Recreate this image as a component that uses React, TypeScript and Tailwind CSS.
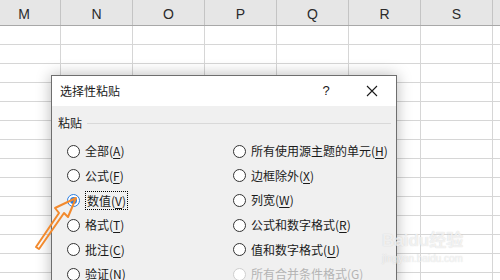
import React from "react";

const cols = ["M", "N", "O", "P", "Q", "R", "S"];
const rows = Array.from({ length: 14 });

function Label({ text, acc, disabled }: { text: string; acc: string; disabled?: boolean }) {
  return (
    <span className={disabled ? "text-[#b4b4b4]" : "text-[#1a1a1a]"}>
      {text}(<span className="underline underline-offset-2">{acc}</span>)
    </span>
  );
}

function Radio({ checked, disabled }: { checked?: boolean; disabled?: boolean }) {
  return (
    <span
      className={
        "flex h-[13px] w-[13px] shrink-0 items-center justify-center rounded-full border bg-white " +
        (checked ? "border-[#2a7de1]" : disabled ? "border-[#cfcfcf]" : "border-[#333333]")
      }
    >
      {checked && <span className="h-[7px] w-[7px] rounded-full bg-[#2a7de1]" />}
    </span>
  );
}

const left: { t: string; a: string; checked?: boolean }[] = [
  { t: "全部", a: "A" },
  { t: "公式", a: "F" },
  { t: "数值", a: "V", checked: true },
  { t: "格式", a: "T" },
  { t: "批注", a: "C" },
  { t: "验证", a: "N" },
];
const right: { t: string; a: string; disabled?: boolean }[] = [
  { t: "所有使用源主题的单元", a: "H" },
  { t: "边框除外", a: "X" },
  { t: "列宽", a: "W" },
  { t: "公式和数字格式", a: "R" },
  { t: "值和数字格式", a: "U" },
  { t: "所有合并条件格式", a: "G", disabled: true },
];

export default function App() {
  return (
    <div
      className="relative h-[280px] w-[500px] overflow-hidden bg-white"
      style={{ fontFamily: '"Noto Sans CJK SC", "Liberation Sans", sans-serif' }}
    >
      {/* header */}
      <div className="flex h-[26px] border-b border-[#a8a8a8] bg-[#e6e6e6]">
        {cols.map((c, i) => (
          <div
            key={c}
            className={
              "flex shrink-0 items-end justify-center border-r border-[#c4c4c4] pb-[1px] text-[14px] leading-[20px] text-[#2b2b2b] " +
              (i === 0 ? "w-[61px] pr-[12px]" : "w-[72px]")
            }
            style={{ fontFamily: '"Liberation Sans", Arial, sans-serif' }}
          >
            {c}
          </div>
        ))}
      </div>
      {/* grid */}
      {rows.map((_, r) => (
        <div key={r} className="flex h-[19px] border-b border-[#d6d6d6]">
          {cols.map((c, i) => (
            <div
              key={c}
              className={"shrink-0 border-r border-[#d6d6d6] " + (i === 0 ? "w-[61px]" : "w-[72px]")}
            />
          ))}
        </div>
      ))}

      {/* dialog */}
      <div className="absolute left-[51px] top-[75px] flex h-[230px] w-[346px] flex-col border border-[#6e6e6e] bg-[#f0f0f0] shadow-[0_0_14px_rgba(0,0,0,0.28)]">
        <div className="flex h-[30px] items-center bg-white pl-[8px] text-[12px] text-[#1a1a1a]">
          <span className="flex-1">选择性粘贴</span>
          <span className="w-[20px] text-center text-[13px]" style={{ fontFamily: '"Liberation Sans", sans-serif' }}>?</span>
          <span className="ml-[26px] mr-[14px] flex w-[20px] justify-center">
            <svg width="12" height="12" viewBox="0 0 12 12">
              <path d="M1 1 L11 11 M11 1 L1 11" stroke="#1a1a1a" strokeWidth="1.1" />
            </svg>
          </span>
        </div>
        <div className="flex items-center pl-[6px] pr-[5px] pt-[8px] text-[12px] text-[#1a1a1a]">
          <span>粘贴</span>
          <span className="ml-[5px] h-px flex-1 bg-[#d9d9d9]" />
        </div>
        <div className="mt-[7px] flex pl-[15px] text-[12px]">
          <div className="flex w-[166px] flex-col">
            {left.map((o) => (
              <div key={o.t} className="flex h-[24.6px] items-center gap-[5px]">
                <Radio checked={o.checked} />
                {o.checked ? (
                  <span className="border border-dotted border-black px-[1px] leading-[17px]">
                    <Label text={o.t} acc={o.a} />
                  </span>
                ) : (
                  <Label text={o.t} acc={o.a} />
                )}
              </div>
            ))}
          </div>
          <div className="flex flex-col">
            {right.map((o) => (
              <div key={o.t} className="flex h-[24.6px] items-center gap-[5px]">
                <Radio disabled={o.disabled} />
                <Label text={o.t} acc={o.a} disabled={o.disabled} />
              </div>
            ))}
          </div>
        </div>
      </div>

      {/* arrow annotation */}
      <svg className="pointer-events-none absolute left-0 top-0" width="500" height="280">
        <polygon
          points="36,247 59,213 55,208 76,198 68,217 64,213 39,249"
          fill="none"
          stroke="#f28a2e"
          strokeWidth="2"
          strokeLinejoin="round"
        />
      </svg>

      {/* watermark */}
      <div className="pointer-events-none absolute left-[382px] top-[230px] flex flex-col items-center text-[rgba(255,255,255,0.7)]">
        <span className="text-[17px] font-bold leading-[22px]" style={{ fontFamily: '"Liberation Sans", "Noto Sans CJK SC", sans-serif', textShadow: "0 0 1px rgba(150,150,150,0.45)" }}>
          Baidu经验
        </span>
        <span className="text-[10px] leading-[14px]" style={{ fontFamily: '"Liberation Sans", sans-serif', textShadow: "0 0 1px rgba(150,150,150,0.45)" }}>
          jingyan.baidu.com
        </span>
      </div>
    </div>
  );
}
